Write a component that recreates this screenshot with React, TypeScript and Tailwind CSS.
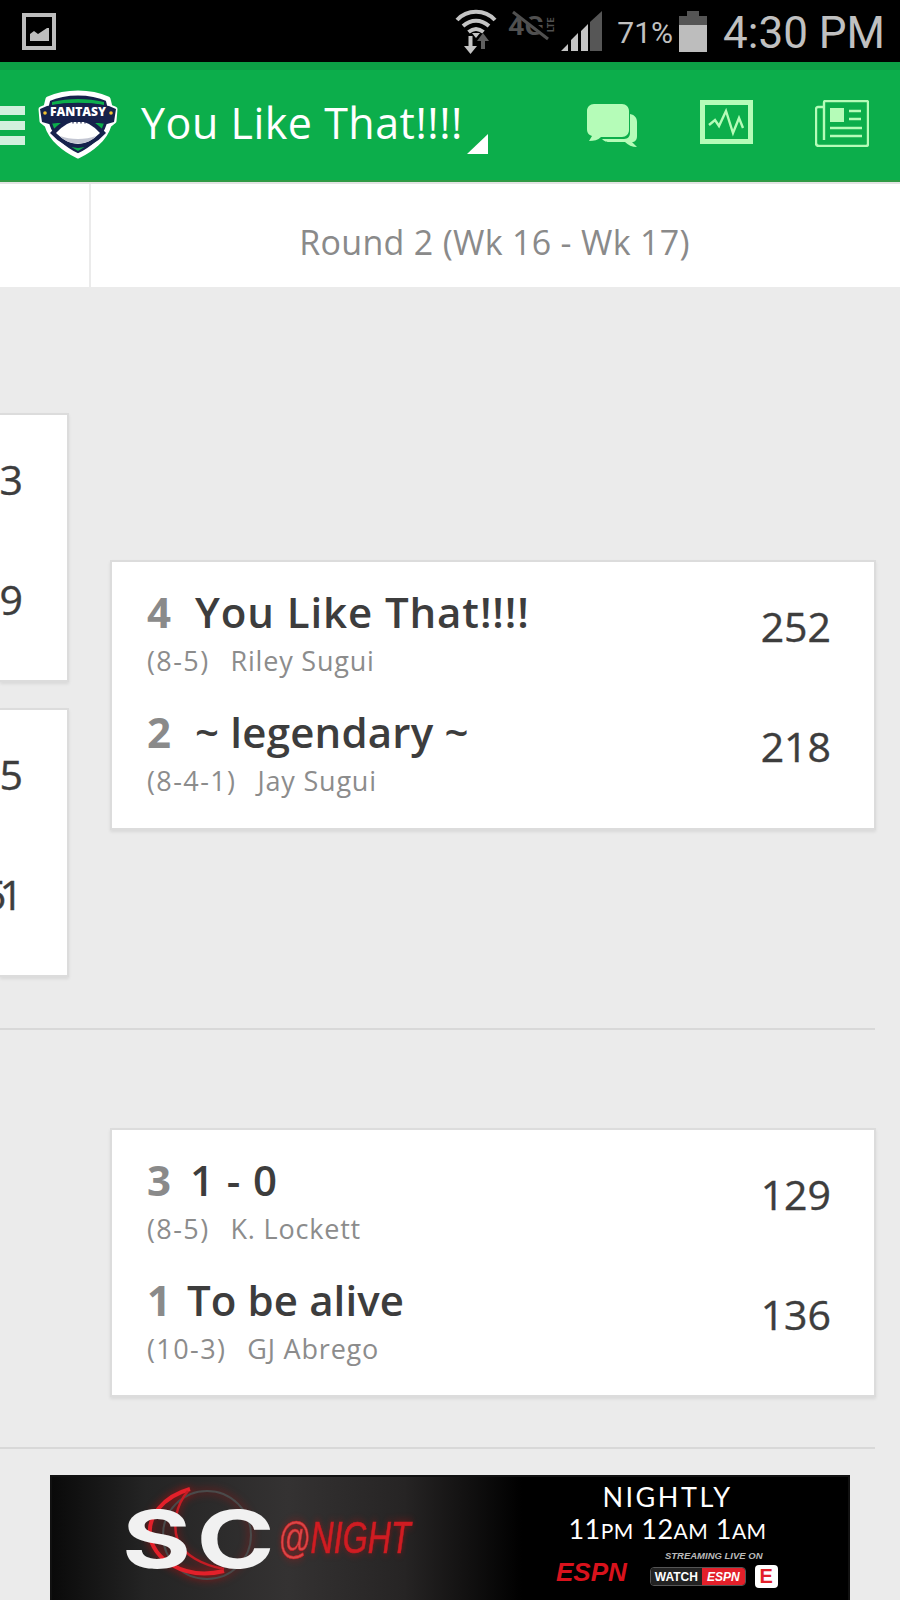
const sans = 'font-["Open_Sans",sans-serif]';

function ImageIcon() {
  return (
    <svg width="34" height="37" viewBox="0 0 34 37">
      <rect x="2" y="2" width="30" height="33" fill="none" stroke="#bdbdbd" strokeWidth="4" />
      <path d="M8 28v-7l4-3 4 3 9-6 2 0v13z" fill="#bdbdbd" />
    </svg>
  );
}

function StatusIcons() {
  return (
    <>
      <svg width="42" height="46" viewBox="0 0 42 46">
        <path d="M2 12C12 1 30 1 40 12M8 18c8-7 18-7 26 0M13.500 24c5-4 10-4 15 0" fill="none" stroke="#c4c4c4" strokeWidth="4" />
        <path d="M21 30l-4-5h8z" fill="#c4c4c4" />
        <path d="M13.500 28h4v10h4.500l-6.500 8-6.500-8h4.500z" fill="#c4c4c4" />
        <path d="M28 25l6 8h-4v8h-4v-8h-4z" fill="#5f5f5f" />
      </svg>
      <svg width="47" height="32" viewBox="0 0 47 32" className="ml-[11px] self-start mt-[2px]">
        <text x="0" y="25" fontFamily="Roboto, sans-serif" fontWeight="700" fontSize="26" textLength="36" lengthAdjust="spacingAndGlyphs" fill="#505050">4G</text>
        <path d="M7 1l35 27" stroke="#000" strokeWidth="6" />
        <path d="M5 2l35 27" stroke="#505050" strokeWidth="3" />
        <text x="0" y="0" transform="translate(46 22) rotate(-90)" fontFamily="Roboto, sans-serif" fontWeight="700" fontSize="9" fill="#505050">LTE</text>
      </svg>
      <svg width="42" height="40" viewBox="0 0 42 40" className="ml-[6px]">
        <path d="M0 40l7-7v7zM10 40V29l7-7v18zM20 40V20l7-7v27z" fill="#c4c4c4" />
        <path d="M29 40V11L41 0v40z" fill="#565656" />
      </svg>
      <span className='ml-[14px] font-["Roboto",sans-serif] text-[30px] leading-none text-[#c0c0c0] mt-[3px]'>71%</span>
      <svg width="28" height="41" viewBox="0 0 28 41" className="ml-[6px]">
        <path d="M8 0h12v5h8v9H0V5h8z" fill="#555" />
        <rect y="14" width="28" height="27" fill="#bdbdbd" />
      </svg>
    </>
  );
}

const shieldPath =
  "M41 4C52 4 62 6 71 10L73 18 78 20 77 32 72 36C68 50 54 61 41 67 28 61 14 50 10 36L5 32 4 20 9 18 11 10C20 6 30 4 41 4Z";

function FantasyLogo() {
  return (
    <svg width="82" height="72" viewBox="0 0 82 72">
      <path d={shieldPath} fill="#16224c" stroke="#fff" strokeWidth="5" strokeLinejoin="round" />
      <path d="M15 13c17-4 35-4 52 0v3c-17-3-35-3-52 0z" fill="#0cae4b" />
      <path d="M15 34h52c-4 13-15 22-26 28-11-6-22-15-26-28z" fill="#0cae4b" />
      <path d="M3 20L10 17Q41 11 72 17L79 20 77 33 70 35Q41 30 12 35L5 33Z" fill="#16224c" />
      <path d="M13 44Q41 12 69 44 41 74 13 44Z" fill="#16224c" />
      <path d="M19 44Q41 20 63 44 41 66 19 44Z" fill="#fff" />
      <path d="M23 47c10 4 26 4 36 0-8 10-28 10-36 0z" fill="#c3c6d2" />
      <path d="M33 32.500h17M36 30.500v4M40 30.500v4M44 30.500v4M48 30.500v4" stroke="#16224c" strokeWidth="1.100" />
      <text x="41" y="27" textAnchor="middle" fontFamily="Open Sans, sans-serif" fontWeight="800" fontSize="12.500" textLength="56" lengthAdjust="spacingAndGlyphs" fill="#fff">FANTASY</text>
      <circle cx="8" cy="24" r="1.800" fill="#f2c230" />
      <circle cx="74" cy="24" r="1.800" fill="#f2c230" />
    </svg>
  );
}

function HeaderIcons() {
  return (
    <div className="flex items-center ml-auto mr-[31px]">
      <svg width="52" height="45" viewBox="0 0 52 45">
        <path d="M44 11c5 1 7 4 7 8v14c0 4-2 6-5 6l5 5c-5 0-9-2-12-5H24c-3 0-5 0-8-3h22c4 0 6-3 6-6z" fill="#b5fcb8" />
        <path d="M8 1h28c4 0 7 3 7 7v19c0 4-3 7-7 7H15c-3 3-7 4-12 4l3-5C3 32 1 30 1 26V8c0-4 3-7 7-7z" fill="#b5fcb8" />
      </svg>
      <svg width="53" height="44" viewBox="0 0 53 44" className="ml-[62px] mb-[6px]">
        <rect x="2.500" y="2.500" width="48" height="39" fill="none" stroke="#b5fcb8" strokeWidth="5" />
        <path d="M9 25l6-5 4 6 7-15 7 22 6-15 4 10" fill="none" stroke="#b5fcb8" strokeWidth="2.400" />
      </svg>
      <svg width="54" height="47" viewBox="0 0 54 47" className="ml-[62px] mb-[3px]">
        <path d="M9 7H3c-1 0-2 1-2 2v34c0 2 1 3 3 3h47c1 0 2-1 2-2V2c0-1-1-1-2-1H10C9 1 9 2 9 3v37" fill="none" stroke="#b5fcb8" strokeWidth="2.400" />
        <rect x="15" y="8" width="14" height="14" fill="#b5fcb8" />
        <path d="M34 11h12M34 19h12M15 28h32M15 36h32" stroke="#b5fcb8" strokeWidth="2.400" />
      </svg>
    </div>
  );
}

function Team({ seed, name, gap, record, owner, score, track }: { seed: string; name: string; gap: string; record: string; owner: string; score: string; track: string }) {
  return (
    <div className="flex items-center justify-between h-[120px]">
      <div>
        <div className="flex items-center h-[50px] leading-none">
          <span className="text-[42px] font-bold text-[#8a8a8a]">{seed}</span>
          <span className={`${gap} ${track} text-[42px] font-semibold text-[#3d3d3d]`}>{name}</span>
        </div>
        <div className="flex mt-[7px] text-[27px] leading-[34px] text-[#8c8c8c]">
          <span className="tracking-[1.4px]">{record}</span>
          <span className="ml-[21px] tracking-[0.8px]">{owner}</span>
        </div>
      </div>
      <span className="text-[41px] font-medium [-webkit-text-stroke:0.4px_#3d3d3d] text-[#3d3d3d] mb-[11px]">{score}</span>
    </div>
  );
}

function SideCard({ top, bottom }: { top: React.ReactNode; bottom: React.ReactNode }) {
  return (
    <div className="h-[269px] border-2 border-l-0 border-[#dcdcdc] bg-white shadow-[0_2px_3px_rgba(0,0,0,0.08)] pt-[34px] pr-[44px] text-[41px] font-medium [-webkit-text-stroke:0.4px_#3d3d3d] leading-[60px] text-[#3d3d3d] overflow-hidden">
      <div className="h-[120px] flex justify-end">{top}</div>
      <div className="h-[120px] flex justify-end">{bottom}</div>
    </div>
  );
}

function MatchCard({ children, height }: { children: React.ReactNode; height: string }) {
  return (
    <div className={`${height} w-[766px] border-2 border-[#dcdcdc] bg-white shadow-[0_2px_3px_rgba(0,0,0,0.08)] pl-[35px] pr-[43px] pt-[10px]`}>
      {children}
    </div>
  );
}

function SportsCenterAd() {
  return (
    <div className="ml-[50px] mt-[26px] w-[800px] h-[125px] flex items-stretch bg-black border-2 border-b-0 border-[#111] overflow-hidden">
      <div className="w-[470px] bg-[linear-gradient(90deg,#0a0a0a_0%,#242424_20%,#343232_50%,#262424_75%,#000_100%)] relative flex items-center">
        <svg width="130" height="110" viewBox="0 0 130 110" className="absolute left-[90px] top-[8px] drop-shadow-[0_0_4px_rgba(255,0,0,0.6)]">
          <circle cx="65" cy="50" r="44" fill="none" stroke="#4a4a4a" strokeWidth="2" />
          <path d="M48 4C20 12 6 32 8 50 10 72 40 96 82 86" fill="none" stroke="#e3202a" strokeWidth="4" />
          <path d="M46 6C34 20 30 40 36 56 42 70 60 80 82 84" fill="none" stroke="#c51c24" strokeWidth="2.500" />
        </svg>
        <span className='relative ml-[70px] font-["Inter",sans-serif] font-bold text-[80px] leading-none text-[#f1f1f1] scale-x-[1.32] origin-left'>
          <span className="tracking-[4px]">S</span>C
        </span>
        <span className='absolute left-[226px] top-[39px] font-["Liberation_Sans",sans-serif] italic text-[44px] leading-none text-[#d01c22] [-webkit-text-stroke:0.6px_#d01c22] scale-x-[0.73] origin-left drop-shadow-[0_0_4px_rgba(255,0,0,0.4)]'>
          <span className="text-[#d84848]">@</span>NIGHT
        </span>
      </div>
      <div className="flex-1 flex flex-col items-center pr-[35px] text-white font-['Lato',sans-serif]">
        <div className="mt-[4px] text-[27px] leading-[32px] tracking-[2.500px]">NIGHTLY</div>
        <div className="text-[27px] leading-[32px] tracking-[0.500px]">
          11<span className="text-[21px]">PM</span> 12<span className="text-[21px]">AM</span> 1<span className="text-[21px]">AM</span>
        </div>
        <div className="flex items-end mt-[3px] w-full pl-[34px]">
          <span className="font-['Liberation_Sans',sans-serif] font-bold italic text-[26px] leading-[24px] text-[#d8121c] mb-[4px]">ESPN</span>
          <div className="ml-[23px] flex flex-col items-center font-['Liberation_Sans',sans-serif] font-bold">
            <span className="italic text-[9.500px] leading-[12px] text-[#bbb]">STREAMING LIVE ON</span>
            <div className="flex items-center mt-[3px]">
              <div className="flex items-center h-[19px] rounded-[4px] border border-[#555] overflow-hidden text-[12px]">
                <span className="px-[4px] bg-[#222]">WATCH</span>
                <span className="px-[5px] h-full bg-[#e3202a] italic">ESPN</span>
              </div>
              <span className="ml-[9px] w-[23px] h-[23px] rounded-[4px] bg-white text-[#e3202a] text-[20px] leading-[23px] text-center">E</span>
            </div>
          </div>
        </div>
      </div>
    </div>
  );
}

export default function App() {
  return (
    <div className={`w-[900px] h-[1600px] overflow-hidden bg-[#ebebeb] ${sans}`}>
      <div className="h-[62px] bg-black flex items-center pl-[22px] pr-[15px]">
        <ImageIcon />
        <div className="flex items-center ml-auto">
          <StatusIcons />
          <span className='ml-[16px] mt-[3px] font-["Roboto",sans-serif] text-[44px] leading-none text-[#c0c0c0]'>4:30 PM</span>
        </div>
      </div>

      <div className="h-[120px] bg-[#0cae4b] border-t-[8px] border-t-[#0c9f45] border-b-2 border-b-[#2f9a45] flex items-center">
        <div className="w-[25px] flex flex-col gap-[6px]">
          <div className="h-[9px] bg-[#d2f0dd]" />
          <div className="h-[9px] bg-[#d2f0dd]" />
          <div className="h-[9px] bg-[#d2f0dd]" />
        </div>
        <div className="ml-[12px]">
          <FantasyLogo />
        </div>
        <span className="ml-[22px] text-[43px] leading-none text-white mb-[6px] tracking-[0.5px]">You Like That!!!!</span>
        <svg width="21" height="20" viewBox="0 0 21 20" className="ml-[4px] mt-[38px]">
          <path d="M21 0v20H0z" fill="#fff" />
        </svg>
        <HeaderIcons />
      </div>

      <div className="h-[105px] border-t-2 border-[#e3e3e3] bg-white flex">
        <div className="w-[91px] border-r-2 border-[#ebebeb]" />
        <div className="w-[807px] text-center text-[34px] leading-[116px] text-[#8a8a8a] tracking-[0.3px]">Round 2 (Wk 16 - Wk 17)</div>
      </div>

      <div className="flex h-[743px] w-[875px] border-b-2 border-[#d8d8d8]">
        <div className="w-[69px] shrink-0 flex flex-col gap-[26px] pt-[126px]">
          <SideCard top="3" bottom="9" />
          <SideCard top="5" bottom={<><span className="mr-[-7px]">5</span><span>1</span></>} />
        </div>
        <div className="ml-[41px] pt-[273px]">
          <MatchCard height="h-[270px]">
            <Team seed="4" name="You Like That!!!!" gap="ml-[24px]" track="tracking-[0.9px]" record="(8-5)" owner="Riley Sugui" score="252" />
            <Team seed="2" name="~ legendary ~" gap="ml-[24px]" track="tracking-[0.2px]" record="(8-4-1)" owner="Jay Sugui" score="218" />
          </MatchCard>
        </div>
      </div>

      <div className="h-[419px] w-[875px] border-b-2 border-[#d8d8d8] pl-[110px] pt-[98px]">
        <MatchCard height="h-[269px]">
          <Team seed="3" name="1 - 0" gap="ml-[19px]" track="tracking-[0.9px]" record="(8-5)" owner="K. Lockett" score="129" />
          <Team seed="1" name="To be alive" gap="ml-[16px]" track="tracking-[0.1px]" record="(10-3)" owner="GJ Abrego" score="136" />
        </MatchCard>
      </div>

      <SportsCenterAd />
    </div>
  );
}
